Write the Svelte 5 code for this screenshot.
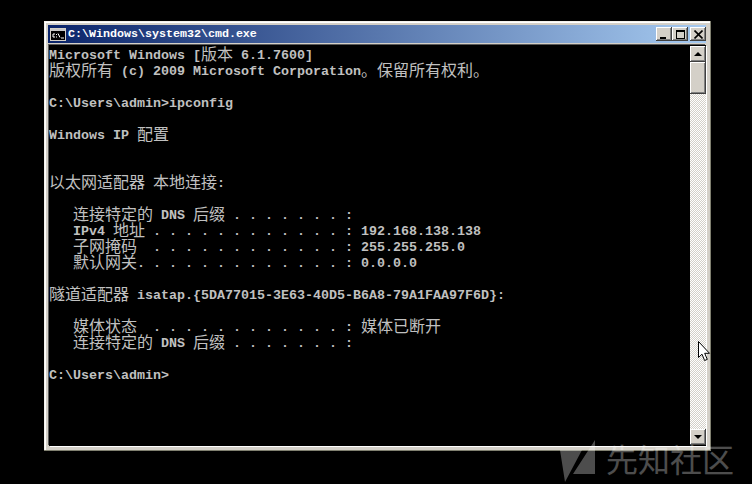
<script lang="ts">
  const lines = [
    "Microsoft Windows [版本 6.1.7600]",
    "版权所有 (c) 2009 Microsoft Corporation。保留所有权利。",
    "",
    "C:\\Users\\admin>ipconfig",
    "",
    "Windows IP 配置",
    "",
    "",
    "以太网适配器 本地连接:",
    "",
    "   连接特定的 DNS 后缀 . . . . . . . :",
    "   IPv4 地址 . . . . . . . . . . . . : 192.168.138.138",
    "   子网掩码  . . . . . . . . . . . . : 255.255.255.0",
    "   默认网关. . . . . . . . . . . . . : 0.0.0.0",
    "",
    "隧道适配器 isatap.{5DA77015-3E63-40D5-B6A8-79A1FAA97F6D}:",
    "",
    "   媒体状态  . . . . . . . . . . . . : 媒体已断开",
    "   连接特定的 DNS 后缀 . . . . . . . :",
    "",
    "C:\\Users\\admin>",
  ];

  // CJK runs are double width (16px) in the console, latin is 8px
  function segments(line: string) {
    return line.split(/([\u3000-\u9fff]+)/).filter(Boolean).map((text) => ({
      text,
      cjk: /[\u3000-\u9fff]/.test(text),
    }));
  }
</script>

<div class="desktop">
  <div class="window">
    <div class="titlebar">
      <svg class="icon" width="16" height="13" viewBox="0 0 16 13">
        <rect x="0.5" y="0.5" width="15" height="12" fill="#000" stroke="#d4d0c8" />
        <rect x="1" y="1" width="14" height="2" fill="#c8c8c8" />
        <path d="M3 6h2M3 6v3M3 9h2M6.5 6v1M6.5 8.5v1M8 5.5l2 4M11 10h3" stroke="#fff" fill="none" />
      </svg>
      <span class="title">C:\Windows\system32\cmd.exe</span>
      <div class="controls">
        <button class="ctl" aria-label="minimize"><span class="min"></span></button>
        <button class="ctl" aria-label="maximize"><span class="max"></span></button>
        <button class="ctl close" aria-label="close">
          <svg width="9" height="9" viewBox="0 0 9 9"><path d="M0.5 0.5L8.5 8.5M8.5 0.5L0.5 8.5" stroke="#000" stroke-width="1.6" /></svg>
        </button>
      </div>
    </div>
    <div class="client">
      <div class="console">
        {#each lines as line}
          <div class="line">{#each segments(line) as seg}<span class:cjk={seg.cjk}>{seg.text}</span>{/each}</div>
        {/each}
      </div>
      <div class="scrollbar">
        <div class="sb-btn"><span class="arrow up"></span></div>
        <div class="sb-thumb"></div>
        <div class="sb-track"></div>
        <div class="sb-btn"><span class="arrow down"></span></div>
      </div>
    </div>
  </div>

  <svg class="cursor" width="13" height="21" viewBox="0 0 13 21">
    <path d="M0.5 0.5V16.5L4 13.2L6.6 19.5L9.3 18.4L6.7 12.3H11.5Z" fill="#fff" stroke="#000" />
  </svg>

  <div class="watermark">
    <svg width="36" height="43" viewBox="0 0 36 43">
      <path d="M0 10H22L5 42Z M35 0V34H13Z" fill="#fff" />
    </svg>
    <span>先知社区</span>
  </div>
</div>

<style>
  :global(body) {
    background: #000;
    overflow: hidden;
  }

  .desktop {
    position: relative;
    width: 752px;
    height: 484px;
    padding: 21px 0 0 44px;
    box-sizing: border-box;
    background: #000;
  }

  .window {
    width: 667px;
    height: 430px;
    box-sizing: border-box;
    padding: 4px 5px 5px 4px;
    background: #d4d0c8;
    box-shadow: inset -1px -1px 0 #808070, inset 1px 1px 0 #f4f2ec, inset 2px 2px 0 #fff;
    display: flex;
    flex-direction: column;
  }

  .titlebar {
    height: 18px;
    flex: none;
    display: flex;
    align-items: center;
    padding-left: 2px;
    background: linear-gradient(90deg, #0a246a, #a6caf0);
  }

  .icon {
    flex: none;
  }

  .title {
    margin-left: 2px;
    color: #fff;
    font: bold 11.66px/16px "Liberation Mono", monospace;
    white-space: pre;
  }

  .controls {
    margin-left: auto;
    display: flex;
  }

  .ctl {
    width: 16px;
    height: 14px;
    padding: 0;
    margin: 0;
    border: 0;
    position: relative;
    background: #d4d0c8;
    box-shadow: inset -1px -1px 0 #404040, inset 1px 1px 0 #fff, inset -2px -2px 0 #808080;
    display: flex;
    align-items: center;
    justify-content: center;
  }

  .close {
    margin-left: 2px;
  }

  .min {
    width: 6px;
    height: 2px;
    background: #000;
    margin: 7px 3px 0 0;
  }

  .max {
    width: 7px;
    height: 6px;
    border: 1px solid #000;
    border-top-width: 2px;
  }

  .client {
    flex: 1;
    min-height: 0;
    margin: 2px 0 0 1px;
    display: flex;
    background: #000;
    box-shadow: -1px -1px 0 #5a5a5a, 1px 1px 0 #fff;
  }

  .console {
    flex: 1;
    min-width: 0;
    padding: 3px 0 0 0;
    color: #c0c0c0;
    font: bold 13.33px/16px "Liberation Mono", monospace;
  }

  .line {
    height: 16px;
    white-space: pre;
  }

  /* box stays one row tall, glyphs sit on the latin baseline */
  .cjk {
    display: inline-block;
    height: 16px;
    vertical-align: top;
    font: 400 16px/11px "Noto Sans CJK SC", sans-serif;
  }

  .scrollbar {
    width: 16px;
    flex: none;
    padding: 1px 0;
    display: flex;
    flex-direction: column;
  }

  .sb-btn {
    height: 16px;
    flex: none;
    background: #d4d0c8;
    box-shadow: inset -1px -1px 0 #404040, inset 1px 1px 0 #fff, inset -2px -2px 0 #808080;
    display: flex;
    align-items: center;
    justify-content: center;
  }

  .arrow {
    width: 0;
    height: 0;
    border-left: 4px solid transparent;
    border-right: 4px solid transparent;
  }

  .arrow.up {
    border-bottom: 4px solid #000;
  }

  .arrow.down {
    border-top: 4px solid #000;
  }

  .sb-thumb {
    height: 32px;
    flex: none;
    background: #d4d0c8;
    box-shadow: inset -1px -1px 0 #404040, inset 1px 1px 0 #fff, inset -2px -2px 0 #808080;
  }

  .sb-track {
    flex: 1;
    background: repeating-conic-gradient(#d4d0c8 0 25%, #fff 0 50%) 0 0 / 2px 2px;
  }

  .cursor {
    position: absolute;
    left: 698px;
    top: 341px;
  }

  .watermark {
    position: absolute;
    left: 560px;
    top: 440px;
    display: flex;
    align-items: flex-start;
    gap: 10px;
    color: #fff;
    opacity: 0.3;
    font: 400 32px/36px "Noto Sans CJK SC", sans-serif;
  }
</style>
